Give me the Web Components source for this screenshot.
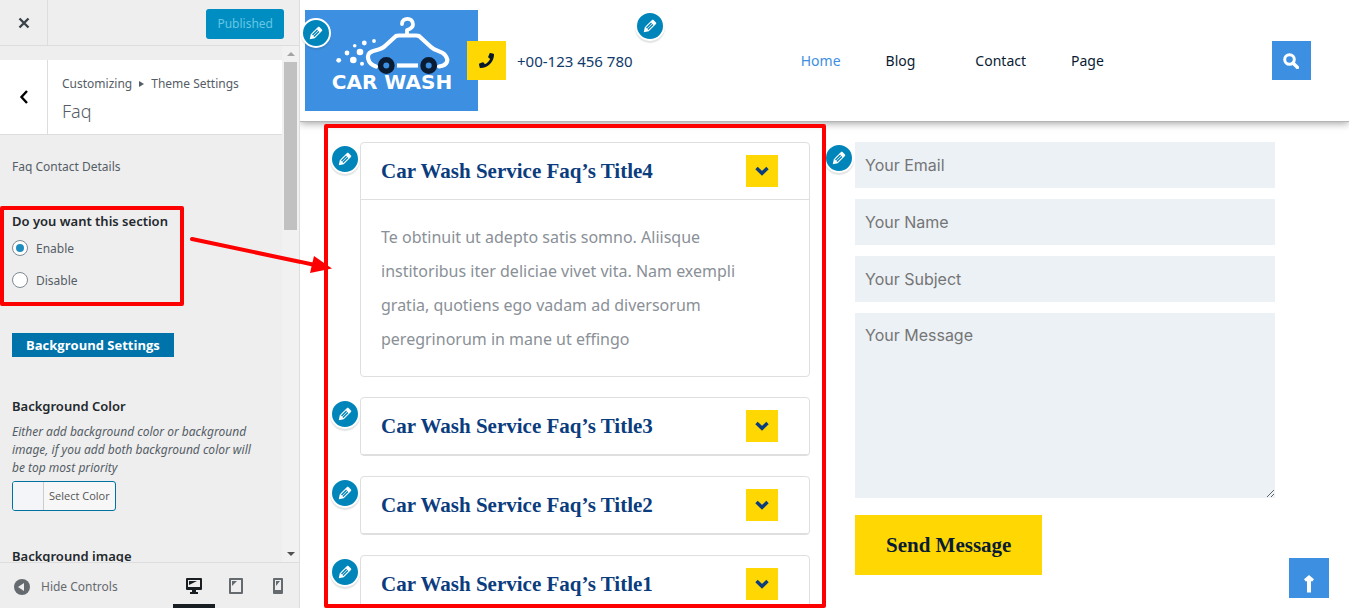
<!doctype html>
<html lang="en">
<head>
    <meta charset="UTF-8">
    <meta name="viewport" content="width=device-width, initial-scale=1.0">
    <title>Customize: Car Wash</title>
    <style>
        html, body {
            margin: 0;
            height: 100%;
        }
        body {
            font-family: "Noto Sans", "Open Sans", sans-serif;
            font-size: 12px;
            color: #555d66;
            overflow: hidden;
            --blue: #3c8fe1;
            --yellow: #ffd703;
            --wp-blue: #0085ba;
            --serif: "Liberation Serif", serif;
        }
    </style>
</head>
<body>
<script>
    function createElement(elementName, html) {
        customElements.define(elementName, class extends HTMLElement {
            constructor() {
                super();
                this.attachShadow({mode: 'open'});
            }

            connectedCallback() {
                this.shadowRoot.innerHTML = `
                    <style>
                        * { box-sizing: border-box; }
                        button, input, textarea { font: inherit; margin: 0; border: 0; }
                        button { cursor: pointer; padding: 0; }
                    </style>` + (typeof html === 'function' ? html(this) : html);
            }
        });
    }

    // round pencil shortcut, hangs over the corner of what it edits
    createElement('edit-badge', `
        <style>
            :host { position: absolute; z-index: 2; }
            button {
                display: grid;
                place-items: center;
                width: 30px;
                height: 30px;
                border: 2px solid #fff;
                border-radius: 50%;
                background: var(--wp-blue);
                box-shadow: 0 2px 1px rgba(60, 67, 74, .15);
            }
        </style>
        <button aria-label="Edit">
            <svg width="18" height="18" viewBox="0 0 20 20" fill="#fff">
                <path d="M13.89 3.39l2.71 2.72c.46.46.42 1.24.03 1.64l-8.01 8.02-5.56 1.16 1.16-5.58s7.6-7.63 7.99-8.03c.39-.39 1.22-.39 1.68.07zm-2.73 2.79l-5.59 5.61 1.11 1.11 5.54-5.65zm-2.97 8.23l5.58-5.6-1.07-1.08-5.59 5.6z"/>
            </svg>
        </button>`);

    createElement('site-logo', `
        <style>
            :host { display: block; position: relative; }
            svg { display: block; }
            edit-badge { left: -4px; top: 8px; }
        </style>
        <svg width="173" height="101" viewBox="0 0 173 101" role="img" aria-label="Car Wash">
            <rect width="173" height="101" fill="#3c8fe1"/>
            <g fill="none" stroke="#fff" stroke-width="4.2" stroke-linecap="round" stroke-linejoin="round">
                <path d="M71 56.500C62 54 61 44 66 42C70 40 76 40 80 36L91 26Q92 25.500 94 25.500H111Q113 25.500 114 26L126 37C130 41 137 41 140 45C144 50 143 55 134 56.500"/>
                <path d="M102 24V20C105 19 108 18 108 14.500C108 7 97 7 97 14" stroke-width="3.800"/>
                <path d="M92 55.500H113" stroke-linecap="butt"/>
            </g>
            <g fill="#3c8fe1" stroke="#0a1c33" stroke-width="5.400">
                <circle cx="81.300" cy="55.500" r="5.700"/>
                <circle cx="123.700" cy="55.500" r="5.700"/>
            </g>
            <g fill="#fff">
                <circle cx="33.700" cy="50.300" r="2.400"/>
                <circle cx="42" cy="43" r="2.400"/>
                <circle cx="48.300" cy="50" r="3.300"/>
                <circle cx="55" cy="42" r="3.300"/>
                <circle cx="49.700" cy="35.700" r="1.800"/>
                <circle cx="59.300" cy="33" r="2.400"/>
                <circle cx="69" cy="31" r="1.900"/>
                <circle cx="57" cy="53.700" r="2"/>
            </g>
            <text x="87" y="79" text-anchor="middle" fill="#fff" font-family="DejaVu Sans, sans-serif" font-weight="700" font-size="20">CAR WASH</text>
        </svg>
        <edit-badge></edit-badge>`);

    createElement('site-phone', `
        <style>
            :host { display: flex; position: relative; align-items: center; gap: 11px; color: #0f3a6b; font-size: 15px; }
            .icon { display: grid; place-items: center; width: 39px; height: 39px; background: var(--yellow); }
            edit-badge { right: -32px; top: -30px; }
        </style>
        <span class="icon">
            <svg width="15" height="15" viewBox="0 0 512 512" fill="#06182c">
                <path d="M493.400 24.600l-104-24c-11.300-2.600-22.900 3.300-27.500 13.900l-48 112c-4.200 9.800-1.400 21.300 6.900 28l60.600 49.600c-36 76.700-98.900 140.500-177.200 177.200l-49.600-60.600c-6.800-8.300-18.200-11.100-28-6.900l-112 48C3.900 366.500-2 378.100.6 389.400l24 104C27.100 504.200 36.700 512 48 512c256.100 0 464-207.500 464-464 0-11.200-7.700-20.900-18.600-23.400z"/>
            </svg>
        </span>
        <slot></slot>
        <edit-badge></edit-badge>`);

    createElement('site-nav', `
        <style>
            nav { display: flex; gap: 45px; font-size: 14px; line-height: 20px; }
            a { color: #0a1c33; text-decoration: none; }
            a.current { color: var(--blue); }
            a.parent { padding-right: 15px; }
        </style>
        <nav>
            <a class="current" href="#">Home</a>
            <a class="parent" href="#">Blog</a>
            <a href="#">Contact</a>
            <a href="#">Page</a>
        </nav>`);

    createElement('site-header', `
        <style>
            :host { display: block; position: relative; z-index: 3; }
            header {
                display: flex;
                align-items: center;
                justify-content: space-between;
                height: 121px;
                padding: 0 38px 0 5px;
                background: #fff;
                box-shadow: 0 1px 0 #b5b5b5, 0 2px 8px rgba(0, 0, 0, .4);
            }
            .brand { display: flex; align-items: center; }
            site-phone { margin-left: -11px; }
            .search { display: grid; place-items: center; width: 39px; height: 39px; background: var(--blue); }
        </style>
        <header>
            <div class="brand">
                <site-logo></site-logo>
                <site-phone>+00-123 456 780</site-phone>
            </div>
            <site-nav></site-nav>
            <button class="search" aria-label="Search">
                <svg width="16" height="16" viewBox="0 0 16 16" fill="none" stroke="#fff" stroke-width="3">
                    <circle cx="6.500" cy="6.500" r="4.800"/>
                    <path d="M10 10l4.500 4.500" stroke-width="3.400" stroke-linecap="round"/>
                </svg>
            </button>
        </header>`);

    createElement('faq-card', host => `
        <style>
            :host { display: block; position: relative; border: 1px solid #dfdfdf; border-radius: 4px; background: #fff; }
            h3 { margin: 0; }
            .title {
                display: flex;
                align-items: center;
                justify-content: space-between;
                width: 100%;
                height: 57px;
                padding: 0 31px 0 20px;
                border-bottom: 1px solid #dfdfdf;
                background: none;
                color: #0b3c7d;
                font: bold 21px/32px var(--serif);
            }
            .arrow { display: grid; place-items: center; width: 32px; height: 32px; background: var(--yellow); }
            .text { padding: 20px 31px 20px 20px; color: #8a9097; font-size: 16px; line-height: 34px; }
            edit-badge { left: -31px; top: 1px; }
        </style>
        <edit-badge></edit-badge>
        <h3>
            <button class="title" aria-expanded="${host.hasAttribute('open')}">
                ${host.getAttribute('heading')}
                <span class="arrow">
                    <svg width="14" height="10" viewBox="0 0 14 10" fill="none" stroke="#0b3c7d" stroke-width="3.400">
                        <path d="M1.500 2L7 7.300L12.500 2"/>
                    </svg>
                </span>
            </button>
        </h3>
        ${host.hasAttribute('open') ? '<div class="text"><slot></slot></div>' : ''}`);

    createElement('faq-list', `
        <style>
            :host { display: flex; position: relative; flex-direction: column; gap: 20px; min-height: 0; }
            .frame { position: absolute; inset: -18px -16px 0 -36px; border: 4px solid #f00; border-radius: 2px; pointer-events: none; z-index: 3; }
        </style>
        <slot></slot>
        <div class="frame"></div>`);

    createElement('contact-form', `
        <style>
            :host { display: block; position: relative; }
            form { display: flex; flex-direction: column; align-items: flex-start; gap: 11px; font: 16px/24px Inter, sans-serif; }
            input, textarea { display: block; width: 100%; padding: 10px; border-radius: 0; background: #ecf1f5; color: #333; outline: 0; }
            input { height: 46px; }
            textarea { height: 185px; resize: vertical; }
            ::placeholder { color: #757575; opacity: 1; }
            button { height: 60px; margin-top: 6px; padding: 0 31px; background: var(--yellow); color: #0a1c33; font: bold 21px/30px var(--serif); }
            edit-badge { left: -31px; top: 1px; }
        </style>
        <edit-badge></edit-badge>
        <form>
            <input type="email" placeholder="Your Email" aria-label="Your Email">
            <input type="text" placeholder="Your Name" aria-label="Your Name">
            <input type="text" placeholder="Your Subject" aria-label="Your Subject">
            <textarea placeholder="Your Message" aria-label="Your Message"></textarea>
            <button type="button">Send Message</button>
        </form>`);

    createElement('site-preview', `
        <style>
            :host { display: grid; position: relative; grid-template-rows: auto 1fr; flex: 1; min-width: 0; background: #fff; overflow: hidden; }
            main { display: grid; grid-template-columns: 450fr 420fr; gap: 45px; min-height: 0; padding: 21px 74px 0 60px; }
            .top { display: grid; place-items: center; position: absolute; right: 20px; bottom: 10px; width: 40px; height: 40px; padding-top: 12px; background: var(--blue); }
        </style>
        <site-header></site-header>
        <main><slot></slot></main>
        <a class="top" href="#" aria-label="Back to top">
            <svg width="12" height="18" viewBox="0 0 12 18" fill="none" stroke="#fff">
                <path d="M6 17.500V3" stroke-width="4"/>
                <path d="M2 5.500L6 2L10 5.500" stroke-width="3"/>
            </svg>
        </a>`);

    createElement('panel-header', `
        <style>
            :host { display: flex; justify-content: space-between; align-items: center; height: 46px; padding-right: 15px; border-bottom: 1px solid #ddd; box-sizing: border-box; }
            .close { display: grid; place-items: center; width: 48px; height: 45px; border-right: 1px solid #ddd; background: none; }
            .save { height: 30px; padding: 0 11px; margin-top: 2px; border-radius: 3px; background: #008ec2; color: #66c6e4; }
        </style>
        <button class="close" aria-label="Close">
            <svg width="12" height="12" viewBox="0 0 12 12" stroke="#3c434a" stroke-width="2.400"><path d="M1.500 1.500l9 9M10.500 1.500l-9 9"/></svg>
        </button>
        <button class="save">Published</button>`);

    createElement('panel-title', `
        <style>
            :host { display: flex; height: 75px; margin-top: 14px; box-sizing: border-box; border-bottom: 1px solid #ddd; background: #fff; }
            .back { display: grid; place-items: center; width: 48px; border-right: 1px solid #ddd; background: #fff; }
            .text { display: flex; flex-direction: column; justify-content: center; padding: 5px 0 0 14px; line-height: 22px; }
            .crumbs { display: flex; align-items: center; gap: 7px; }
            h3 { margin: 0; font-size: 18px; font-weight: 300; line-height: 32px; }
        </style>
        <button class="back" aria-label="Back">
            <svg width="10" height="14" viewBox="0 0 10 14" fill="none" stroke="#000" stroke-width="2.400"><path d="M8 1L2.500 7L8 13"/></svg>
        </button>
        <div class="text">
            <span class="crumbs">Customizing
                <svg width="5" height="6" viewBox="0 0 5 6" fill="#555d66"><path d="M0 0L5 3L0 6z"/></svg>
                Theme Settings</span>
            <h3>Faq</h3>
        </div>`);

    createElement('section-switch', `
        <style>
            :host { display: block; position: relative; }
            fieldset { margin: 0; padding: 0; border: 0; }
            legend { padding: 0; margin-bottom: 5px; color: #23282d; font-size: 13px; font-weight: 600; line-height: 20px; }
            label { display: flex; align-items: center; gap: 8px; height: 24px; }
            label + label { margin-top: 8px; }
            input { appearance: none; display: grid; place-items: center; width: 16px; height: 16px; border: 1px solid #7e8993; border-radius: 50%; background: #fff; }
            input:checked::before { content: ""; width: 8px; height: 8px; border-radius: 50%; background: #1e8cbe; }
            .frame { position: absolute; inset: -5px auto -14px -12px; width: 184px; border: 4px solid #f00; border-radius: 2px; pointer-events: none; }
        </style>
        <fieldset>
            <legend>Do you want this section</legend>
            <label><input type="radio" name="section" checked>Enable</label>
            <label><input type="radio" name="section">Disable</label>
        </fieldset>
        <div class="frame"></div>`);

    createElement('color-setting', `
        <style>
            :host { display: block; }
            h4 { margin: 0 0 7px; color: #23282d; font-size: 13px; font-weight: 600; line-height: 20px; }
            p { margin: 0 0 4px; padding-right: 6px; font-style: italic; line-height: 18px; }
            button { display: flex; align-items: stretch; height: 30px; border: 1px solid #0071a1; border-radius: 3px; background: #f7f7f7; color: #555; font: 11px/28px "Open Sans", sans-serif; overflow: hidden; }
            .swatch { width: 31px; border-right: 1px solid #ccc; background: #f3f5f8; }
            .label { padding: 0 5px; }
        </style>
        <h4>Background Color</h4>
        <p>Either add background color or background image, if you add both background color will be top most priority</p>
        <button><span class="swatch"></span><span class="label">Select Color</span></button>`);

    createElement('panel-body', `
        <style>
            :host { display: flex; flex: 1; min-height: 0; overflow: hidden; }
            .content { flex: 1; min-width: 0; overflow: hidden; }
            .controls { display: flex; flex-direction: column; align-items: flex-start; padding: 22px 12px 0; }
            .note { margin: 0; line-height: 20px; }
            section-switch { margin: 34px 0 41px; }
            .heading { margin: 0; padding: 0 14px; background: #0073aa; color: #fff; font: 700 13px/24px "Open Sans", sans-serif; }
            color-setting { margin: 39px 0 35px; }
            h4 { margin: 0; color: #23282d; font-size: 13px; font-weight: 600; line-height: 20px; }
            .bar { display: flex; flex-direction: column; justify-content: space-between; align-items: center; width: 17px; padding: 5px 0; background: #f1f1f1; }
            .thumb { width: 13px; height: 168px; margin-top: 6px; background: #c1c1c1; }
            .bar .end { margin-top: auto; }
            svg { display: block; }
        </style>
        <div class="content">
            <panel-title></panel-title>
            <div class="controls">
                <p class="note">Faq Contact Details</p>
                <section-switch></section-switch>
                <h3 class="heading">Background Settings</h3>
                <color-setting></color-setting>
                <h4>Background image</h4>
            </div>
        </div>
        <div class="bar">
            <svg width="8" height="5" viewBox="0 0 8 5" fill="#a3a3a3"><path d="M0 5L4 1L8 5z"/></svg>
            <div class="thumb"></div>
            <svg class="end" width="8" height="5" viewBox="0 0 8 5" fill="#505050"><path d="M0 0L4 4L8 0z"/></svg>
        </div>`);

    createElement('panel-footer', `
        <style>
            :host { display: flex; justify-content: space-between; height: 46px; box-sizing: border-box; border-top: 1px solid #ddd; }
            button { background: none; color: #656a6f; }
            .collapse { display: flex; align-items: center; gap: 10px; padding-left: 13px; padding-top: 2px; }
            .devices { display: flex; }
            .devices button { display: grid; place-items: center; width: 42px; border-bottom: 4px solid transparent; padding-top: 5px; }
            .devices .active { border-color: #191e23; }
        </style>
        <button class="collapse">
            <svg width="18" height="18" viewBox="0 0 18 18"><circle cx="9" cy="9" r="8" fill="#656a6f"/><path d="M11 5v8L5 9z" fill="#eee"/></svg>
            Hide Controls
        </button>
        <div class="devices">
            <button class="active" aria-label="Desktop">
                <svg width="16" height="16" viewBox="0 0 16 16" fill="#191e23"><path fill-rule="evenodd" d="M1 0h14q1 0 1 1v10q0 1-1 1h-5v2h2v2H4v-2h2v-2H1q-1 0-1-1V1q0-1 1-1zM2 2v7h12V2z"/><path d="M3 3h8L3 7z"/></svg>
            </button>
            <button aria-label="Tablet">
                <svg width="14" height="16" viewBox="0 0 14 16" fill="#656a6f"><path fill-rule="evenodd" d="M1 0h12q1 0 1 1v14q0 1-1 1H1q-1 0-1-1V1q0-1 1-1zM2 2v12h10V2z"/><path d="M3 3h5L3 8z"/></svg>
            </button>
            <button aria-label="Mobile">
                <svg width="10" height="16" viewBox="0 0 10 16" fill="#656a6f"><path fill-rule="evenodd" d="M1 0h8q1 0 1 1v14q0 1-1 1H1q-1 0-1-1V1q0-1 1-1zM2 2v10h6V2z"/><path d="M3 3h4L3 8z"/></svg>
            </button>
        </div>`);

    createElement('customize-panel', `
        <style>
            :host { display: flex; flex-direction: column; width: 300px; box-sizing: border-box; border-right: 1px solid #ddd; background: #eee; }
        </style>
        <panel-header></panel-header>
        <panel-body></panel-body>
        <panel-footer></panel-footer>`);

    // arrow from the section switch to the faq list
    createElement('link-arrow', `
        <style>
            :host { position: absolute; left: 188px; top: 234px; z-index: 4; pointer-events: none; }
            svg { display: block; }
        </style>
        <svg width="146" height="42" viewBox="0 0 146 42">
            <path d="M4 5L127 31" stroke="#f00" stroke-width="4" stroke-linecap="round"/>
            <path d="M126 22L144 34.500L122 39z" fill="#f00"/>
        </svg>`);

    createElement('customize-app', `
        <style>
            :host { display: flex; position: relative; height: 100vh; overflow: hidden; }
        </style>
        <customize-panel></customize-panel>
        <slot></slot>
        <link-arrow></link-arrow>`);
</script>

<customize-app>
    <site-preview>
        <faq-list>
            <faq-card heading="Car Wash Service Faq’s Title4" open>Te obtinuit ut adepto satis somno. Aliisque institoribus iter deliciae vivet vita. Nam exempli gratia, quotiens ego vadam ad diversorum peregrinorum in mane ut effingo</faq-card>
            <faq-card heading="Car Wash Service Faq’s Title3"></faq-card>
            <faq-card heading="Car Wash Service Faq’s Title2"></faq-card>
            <faq-card heading="Car Wash Service Faq’s Title1"></faq-card>
        </faq-list>
        <contact-form></contact-form>
    </site-preview>
</customize-app>

</body>
</html>
